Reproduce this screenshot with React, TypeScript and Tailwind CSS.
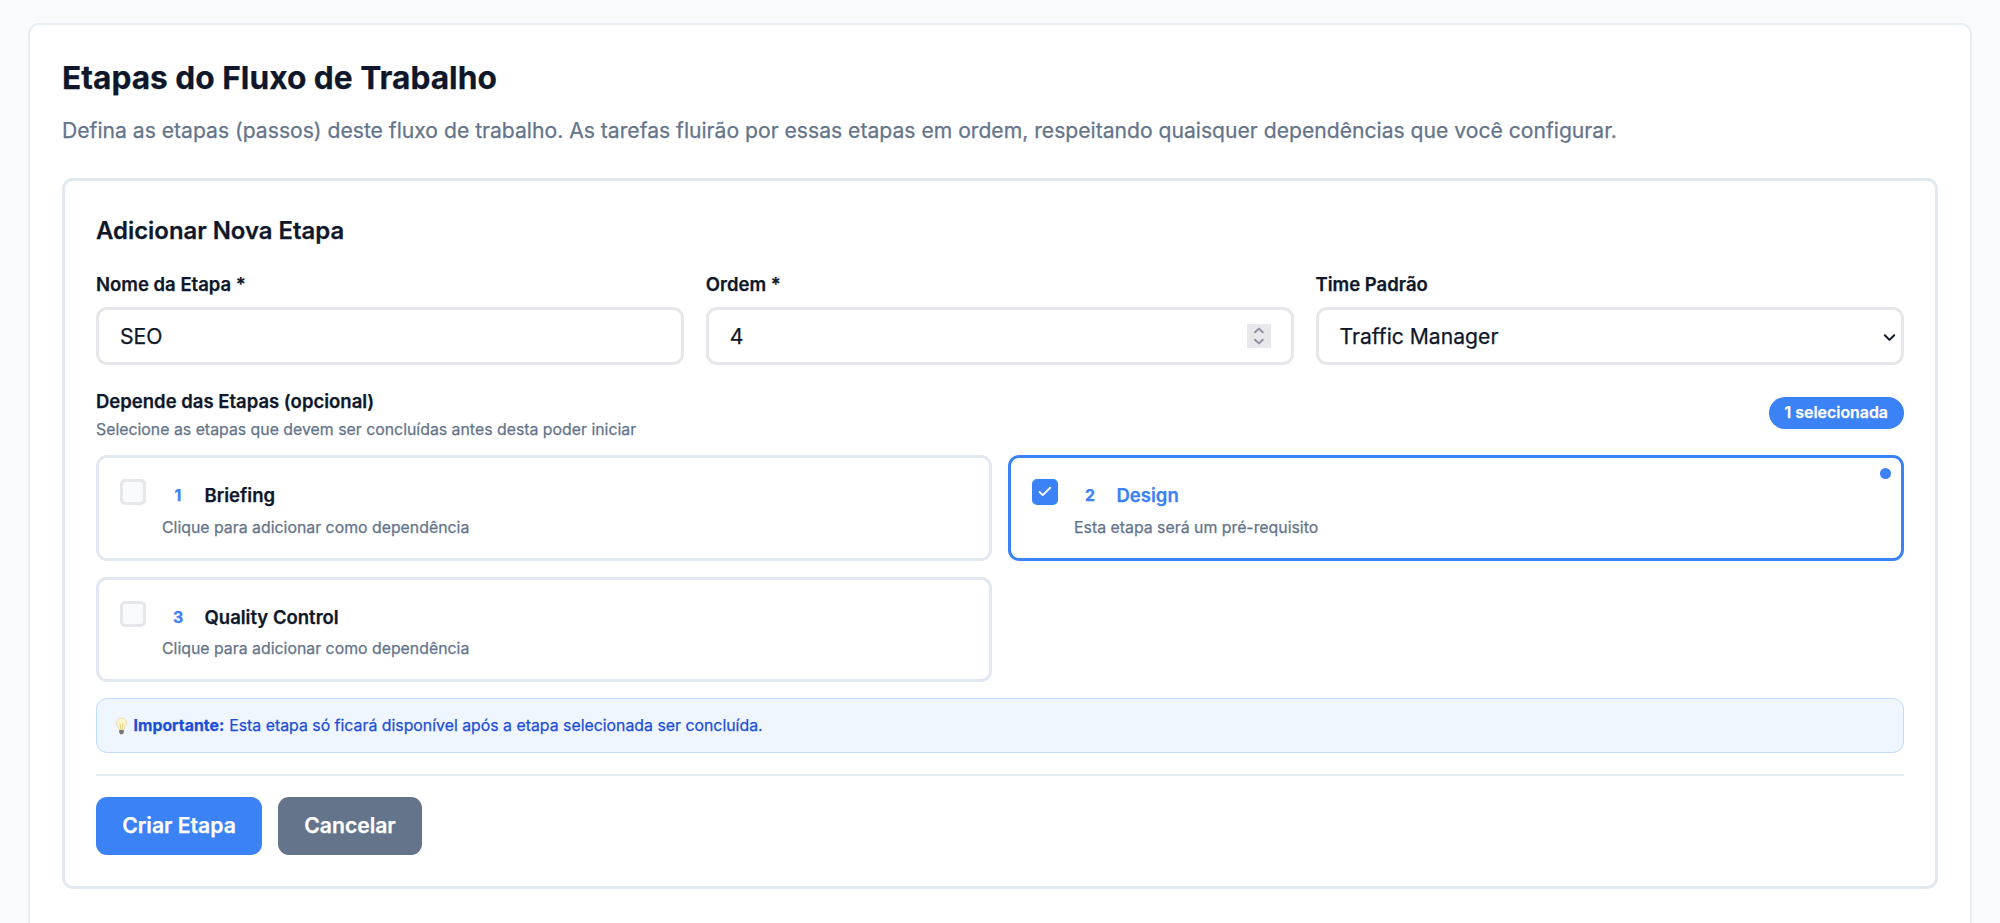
import { useState } from "react";

interface Step {
  order: number;
  name: string;
}

const steps: Step[] = [
  { order: 1, name: "Briefing" },
  { order: 2, name: "Design" },
  { order: 3, name: "Quality Control" },
];

const fieldClass =
  "flex h-[58px] w-full items-center justify-between rounded-[11px] border-3 border-[#e5e7eb] bg-white pt-[2px] pl-[21px] text-[21.15px] text-[#0f172a]";

const Label = ({ children }: { children: string }) => (
  <label className="mb-[9px] block text-[18.5px] leading-[27px] font-semibold">{children}</label>
);

const StepCard = ({ step, selected, onToggle }: { step: Step; selected: boolean; onToggle: () => void }) => (
  <button
    type="button"
    onClick={onToggle}
    className={`relative flex h-[105.5px] items-start gap-4 rounded-[11px] border-3 bg-white px-[21px] pt-[21px] text-left ${
      selected ? "border-[#3b82f6]" : "border-[#e2e8f0]"
    }`}
  >
    <span
      className={`flex size-[26px] items-center justify-center rounded-[5px] border-3 ${
        selected ? "border-[#3b82f6] bg-[#3b82f6]" : "border-[#e5e7eb] bg-[#f8fafc]"
      }`}
    >
      {selected && (
        <svg className="shrink-0" width="16" height="16" viewBox="0 0 16 16" fill="none" stroke="white" strokeWidth="1.9" strokeLinecap="round" strokeLinejoin="round">
          <path d="M2.5 7.9l3.2 3.2 7.5-7.4" />
        </svg>
      )}
    </span>
    <span className="flex flex-col pt-px">
      <span className="flex h-8 items-center gap-[10.5px]">
        <span className="w-8 text-center text-[15.85px] font-bold text-[#3b82f6]">{step.order}</span>
        <span className={`text-[18.5px] font-semibold ${selected ? "text-[#3b82f6]" : "text-[#0f172a]"}`}>{step.name}</span>
      </span>
      <span className="mt-[4.5px] text-[15.85px] leading-[21px] text-[#64748b]">
        {selected ? "Esta etapa será um pré-requisito" : "Clique para adicionar como dependência"}
      </span>
    </span>
    {selected && <span className="absolute top-[10px] right-[10px] size-[11px] rounded-full bg-[#3b82f6]" />}
  </button>
);

const App = () => {
  const [selected, setSelected] = useState<number[]>([2]);

  const toggle = (order: number) =>
    setSelected((prev) => (prev.includes(order) ? prev.filter((o) => o !== order) : [...prev, order]));

  return (
    <div className="h-screen overflow-hidden bg-[#f8fafc] px-[28px] pt-[23px] font-['Inter',sans-serif] text-[#0f172a] [-webkit-text-stroke:0.25px]">
      <section className="h-[1000px] rounded-[11px] border-2 border-[#e8edf4] bg-white px-8 pt-8">
        <h2 className="text-[31.7px] leading-[42px] font-bold">Etapas do Fluxo de Trabalho</h2>
        <p className="mt-4 text-[21.13px] leading-8 text-[#64748b]">
          Defina as etapas (passos) deste fluxo de trabalho. As tarefas fluirão por essas etapas em ordem, respeitando quaisquer dependências que você configurar.
        </p>

        <form className="mt-[31px] h-[711px] rounded-[11px] border-3 border-[#e2e8f0] bg-white px-[31px] pt-8">
          <h3 className="text-[23.9px] leading-9 font-semibold">Adicionar Nova Etapa</h3>

          <div className="mt-[22px] grid grid-cols-3 gap-[21.3px]">
            <div>
              <Label>Nome da Etapa *</Label>
              <div className={fieldClass}>SEO</div>
            </div>
            <div>
              <Label>Ordem *</Label>
              <div className={`${fieldClass} pr-[20px]`}>
                4
                <span className="-mt-[2px] h-6 w-6 bg-[#e8e8ec]">
                  <svg width="24" height="24" viewBox="0 0 24 24" fill="none" stroke="#8f8f9d" strokeWidth="1.9" strokeLinecap="round" strokeLinejoin="round">
                    <path d="M8 8.3l3.9-3.7 3.9 3.7M8 15.7l3.9 3.7 3.9-3.7" />
                  </svg>
                </span>
              </div>
            </div>
            <div>
              <Label>Time Padrão</Label>
              <div className={`${fieldClass} pr-[5px]`}>
                Traffic Manager
                <svg width="13" height="13" viewBox="0 0 13 13" fill="none" stroke="#0f172a" strokeWidth="2" strokeLinecap="round" strokeLinejoin="round">
                  <path d="M1.8 4.2l4.7 4.7 4.7-4.7" />
                </svg>
              </div>
            </div>
          </div>

          <div className="mt-[22px] flex items-center justify-between">
            <div>
              <p className="text-[18.5px] leading-[28px] font-semibold">Depende das Etapas (opcional)</p>
              <p className="mt-[3px] text-[15.85px] leading-6 text-[#64748b]">
                Selecione as etapas que devem ser concluídas antes desta poder iniciar
              </p>
            </div>
            <span className="mb-[3px] flex h-8 items-center rounded-full bg-[#3b82f6] px-4 text-[15.9px] font-semibold text-white">
              {selected.length} {selected.length === 1 ? "selecionada" : "selecionadas"}
            </span>
          </div>

          <div className="mt-[13px] grid grid-cols-2 gap-4">
            {steps.map((step) => (
              <StepCard key={step.order} step={step} selected={selected.includes(step.order)} onToggle={() => toggle(step.order)} />
            ))}
          </div>

          <div className="mt-4 flex h-[55px] items-center rounded-[11px] border border-[#bfdbfe] bg-[#eff6ff] px-4 text-[15.85px] text-[#1d4ed8]">
            <svg className="mr-[4.5px]" width="16" height="18" viewBox="0 0 16 18">
              <path d="M8.5 1a5 5 0 0 0-5 5c0 3 2.4 4.2 2.6 7h4.8c.2-2.8 2.6-4 2.6-7a5 5 0 0 0-5-5z" fill="#fcf4cc" stroke="#e8dba6" strokeWidth="0.8" />
              <path d="M7 6.5l.9 6M10 6.5l-.9 6" stroke="#e9c65c" strokeWidth="0.7" />
              <path d="M6.2 13h4.6v2.7l-1.3 1.5h-2l-1.3-1.5z" fill="#77777a" />
            </svg>
            <strong className="mr-[5px] font-bold">Importante:</strong> Esta etapa só ficará disponível após a etapa selecionada ser concluída.
          </div>

          <div className="mt-[21px] flex gap-4 border-t-2 border-[#e8edf4] pt-[21px]">
            <button type="button" className="h-[58px] w-[166px] rounded-[11px] bg-[#3b82f6] text-[21.15px] font-semibold text-white">Criar Etapa</button>
            <button type="button" className="h-[58px] w-[144px] rounded-[11px] bg-[#64748b] text-[21.15px] font-semibold text-white">Cancelar</button>
          </div>
        </form>
      </section>
    </div>
  );
};

export default App;
